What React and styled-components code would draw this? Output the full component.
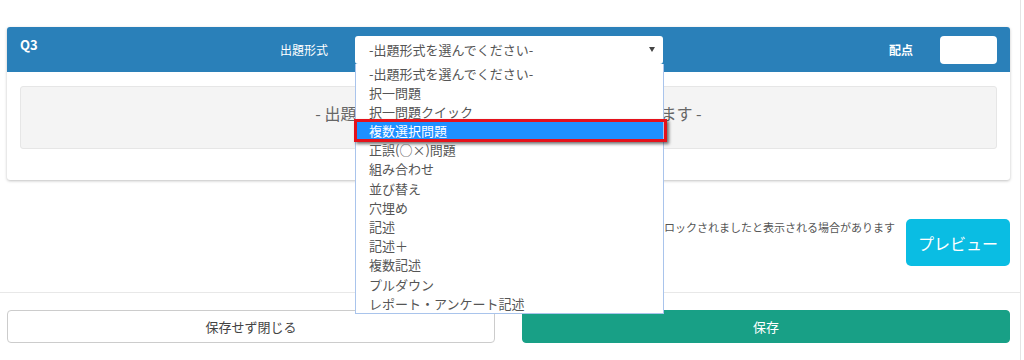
import React from 'react';
import styled, { createGlobalStyle } from 'styled-components';

const GlobalStyle = createGlobalStyle`
    body {
        margin: 0;
        background: #fff;
        font-family: "Noto Sans CJK JP", "Noto Sans", sans-serif;
    }
`;

const Page = styled.div`
    width: 1020px;
    height: 360px;
    border-right: 1px solid #e4e4e4;
    overflow: hidden;
`;

const Top = styled.div`
    padding: 27px 10px 0 7px;
`;

const Card = styled.div`
    background: #fff;
    border-radius: 3px;
    box-shadow: 0 1px 3px rgba(0, 0, 0, 0.25);
`;

const Header = styled.div`
    height: 45px;
    background: #2a80b9;
    border-radius: 3px 3px 0 0;
    display: flex;
    align-items: center;
    padding: 0 13px;
    color: #fff;
`;

const QNum = styled.div`
    width: 260px;
    align-self: flex-start;
    padding-top: 8px;
    font-size: 13px;
    font-weight: bold;
`;

const Label = styled.div`
    width: ${p => p.w}px;
    font-size: 12px;
    font-weight: ${p => (p.bold ? 'bold' : 'normal')};
`;

const SelectWrap = styled.div`
    position: relative;
    width: 308px;
    height: 28px;
`;

const SelectBox = styled.div`
    height: 28px;
    box-sizing: border-box;
    background: #fff;
    border-radius: 3px;
    display: flex;
    align-items: center;
    padding: 0 8px 0 14px;
    font-size: 13px;
    color: #555;
    justify-content: space-between;
`;

const Caret = styled.span`
    width: 0;
    height: 0;
    border-left: 3px solid transparent;
    border-right: 3px solid transparent;
    border-top: 5px solid #444;
`;

const Menu = styled.ul`
    position: absolute;
    top: 28px;
    left: 0;
    width: 309px;
    box-sizing: border-box;
    margin: 0;
    padding: 0;
    list-style: none;
    background: #fff;
    border: 1px solid #a9c4ec;
    border-top: none;
    z-index: 10;
`;

const Item = styled.li`
    position: relative;
    height: 19.2px;
    line-height: 19.2px;
    padding-left: 13px;
    font-size: 13px;
    color: ${p => (p.active ? '#fff' : '#555')};
    background: ${p => (p.active ? '#1e90ff' : 'transparent')};

    ${p => p.active && `
        &::after {
            content: '';
            position: absolute;
            left: -2px;
            right: -4px;
            top: -2px;
            bottom: -2px;
            border: 3px solid #e5121b;
            box-shadow: 2px 2px 3px rgba(0, 0, 0, 0.55);
        }
    `}
`;

const Spacer = styled.div`
    flex: 1;
`;

const ScoreInput = styled.div`
    width: 57px;
    height: 28px;
    background: #fff;
    border-radius: 4px;
    margin-left: 27px;
`;

const Body = styled.div`
    padding: 14px 13px 31px;
`;

const Placeholder = styled.div`
    height: 63px;
    box-sizing: border-box;
    background: #f4f4f4;
    border: 1px solid #e6e6e6;
    border-radius: 3px;
    display: flex;
    align-items: flex-start;
    justify-content: center;
    padding-top: 14px;
    font-size: 16px;
    color: #666;
`;

const NoticeRow = styled.div`
    display: flex;
    justify-content: flex-end;
    align-items: flex-start;
    margin-top: 39px;
`;

const Notice = styled.div`
    font-size: 11px;
    color: #555;
`;

const PreviewButton = styled.button`
    width: 104px;
    height: 47px;
    margin-left: 11px;
    border: none;
    border-radius: 5px;
    background: #0abde3;
    color: #fff;
    font-family: inherit;
    font-size: 16px;
`;

const Divider = styled.div`
    border-top: 1px solid #e8e8e8;
    margin-top: 26px;
`;

const Footer = styled.div`
    display: flex;
    gap: 27px;
    padding: 17px 10px 0 7px;
`;

const FooterButton = styled.button`
    flex: 1;
    height: 33px;
    border-radius: 4px;
    font-family: inherit;
    font-size: 13px;
    border: 1px solid ${p => (p.primary ? '#18a086' : '#ccc')};
    background: ${p => (p.primary ? '#18a086' : '#fff')};
    color: ${p => (p.primary ? '#fff' : '#444')};
`;

const options = [
    '-出題形式を選んでください-',
    '択一問題',
    '択一問題クイック',
    '複数選択問題',
    '正誤(○×)問題',
    '組み合わせ',
    '並び替え',
    '穴埋め',
    '記述',
    '記述＋',
    '複数記述',
    'プルダウン',
    'レポート・アンケート記述',
];

export default function App() {
    return (
        <Page>
            <GlobalStyle />
            <Top>
                <Card>
                    <Header>
                        <QNum>Q3</QNum>
                        <Label w={75}>出題形式</Label>
                        <SelectWrap>
                            <SelectBox>
                                <span>-出題形式を選んでください-</span>
                                <Caret />
                            </SelectBox>
                            <Menu>
                                {options.map((o, i) => (
                                    <Item key={i} active={i === 3}>{o}</Item>
                                ))}
                            </Menu>
                        </SelectWrap>
                        <Spacer />
                        <Label bold>配点</Label>
                        <ScoreInput />
                    </Header>
                    <Body>
                        <Placeholder>- 出題形式を選択すると問題の作成欄が表示されます -</Placeholder>
                    </Body>
                </Card>
                <NoticeRow>
                    <Notice>ポップアップがブロックされましたと表示される場合があります</Notice>
                    <PreviewButton>プレビュー</PreviewButton>
                </NoticeRow>
            </Top>
            <Divider />
            <Footer>
                <FooterButton>保存せず閉じる</FooterButton>
                <FooterButton primary>保存</FooterButton>
            </Footer>
        </Page>
    );
}
